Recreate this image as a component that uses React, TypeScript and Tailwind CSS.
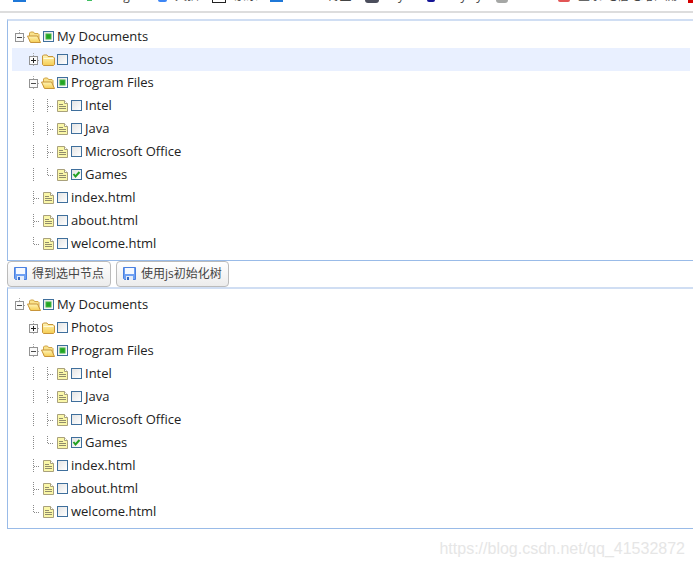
import React, { useState } from 'react';

type NodeState = 'off' | 'on' | 'partial';

interface TreeNode {
  text: string;
  state: NodeState;
  open?: boolean;
  children?: TreeNode[];
}

const documents: TreeNode[] = [
  {
    text: 'My Documents',
    state: 'partial',
    open: true,
    children: [
      { text: 'Photos', state: 'off', open: false, children: [] },
      {
        text: 'Program Files',
        state: 'partial',
        open: true,
        children: [
          { text: 'Intel', state: 'off' },
          { text: 'Java', state: 'off' },
          { text: 'Microsoft Office', state: 'off' },
          { text: 'Games', state: 'on' },
        ],
      },
      { text: 'index.html', state: 'off' },
      { text: 'about.html', state: 'off' },
      { text: 'welcome.html', state: 'off' },
    ],
  },
];

const bookmarks = [
  { icon: 'h-[2px] w-[13px] bg-[#1f78d8]', label: '', width: 'w-[74px]' },
  { icon: 'h-px w-[5px] bg-[#3fbf62]', label: 'Google', width: 'w-[71px]' },
  { icon: 'h-[2px] w-[9px] rounded-b-full bg-[#3d86f5]', label: '天猫', width: 'w-[54px]' },
  { icon: 'h-[3px] w-[14px] border border-t-0 border-[#222222]', label: '京东', width: 'w-[58px]' },
  { icon: 'h-[2px] w-[13px] bg-[#1f78d8]', label: 'Bilibili 博主', width: 'w-[95px]' },
  { icon: 'h-[3px] w-[14px] rounded-b-sm bg-[#4b4e5c]', label: 'my', width: 'w-[62px]' },
  { icon: 'h-[2px] w-2 rounded-b-full bg-[#151596]', label: 'Maya y', width: 'w-[69px]' },
  { icon: 'h-[3px] w-3 rounded-b-sm bg-[#a5a7a5]', label: '', width: 'w-[62px]' },
  { icon: 'h-[2px] w-3 rounded-b-full bg-[#e25555]', label: '登录 电信电路检测', width: 'w-[130px]' },
  { icon: 'h-[3px] w-3 bg-[#d40000]', label: '', width: 'w-3' },
];

const Branch: React.FC<{ last: boolean }> = ({ last }) => (
  <svg width="14" height="14" className="shrink-0" stroke="#8a8a8a" strokeDasharray="1 1">
    <path d={last ? 'M7.5 0V8' : 'M7.5 0V14'} />
    <path d="M8 7.5H14" />
  </svg>
);

const Line = () => (
  <svg width="14" height="14" className="shrink-0" stroke="#8a8a8a" strokeDasharray="1 1">
    <path d="M7.5 0V14" />
  </svg>
);

const Expander: React.FC<{ open: boolean; root: boolean; onClick: () => void }> = ({ open, root, onClick }) => (
  <button type="button" aria-label={open ? 'Collapse' : 'Expand'} onClick={onClick} className="h-[14px] w-[14px] shrink-0">
    <svg width="14" height="14" fill="none">
      <path d={root ? 'M7.5 0V3M12 7.5H14' : 'M7.5 0V3M7.5 12V14M12 7.5H14'} stroke="#aaaaaa" strokeDasharray="1 1" />
      <rect x="3.5" y="3.5" width="8" height="8" fill="#fafafa" stroke="#939393" />
      <path d="M5 7.5H10" stroke={open ? '#4a4a4a' : '#222222'} />
      {!open && <path d="M7.5 5V10" stroke="#222222" />}
    </svg>
  </button>
);

const FolderIcon: React.FC<{ open: boolean }> = ({ open }) => (
  <svg width="14" height="14" className="shrink-0" strokeLinejoin="round">
    <defs>
      <linearGradient id="folder" x1="0" y1="0" x2="0" y2="1">
        <stop offset="0" stopColor="#fff6b8" />
        <stop offset="1" stopColor="#f5cc52" />
      </linearGradient>
    </defs>
    {open ? (
      <>
        <path d="M2.5 11V3L3.5 2H6.5L7.5 3.5H11L12 4.5V11Z" fill="#f9e28c" stroke="#d1a548" />
        <path d="M.5 6H10.5L13.5 12.5H3.5Z" fill="url(#folder)" stroke="#c8953a" />
      </>
    ) : (
      <>
        <path d="M1.5 11.5V3L2.5 2H6L7 3.5H12L13.5 5V11.5L12.5 12.5H2.5Z" fill="url(#folder)" stroke="#c8953a" />
        <path d="M2.5 5.5H12.5" stroke="#fffbe0" />
      </>
    )}
  </svg>
);

const FileIcon = () => (
  <svg width="14" height="14" className="shrink-0">
    <path d="M2.5 1.5H9.5L12.5 4.5V12.5H2.5Z" fill="#faf7a8" stroke="#a9a17c" />
    <path d="M9.5 1.5V4.5H12.5" fill="#ffffff" stroke="#a9a17c" />
    <path d="M4 5.5H8M4 7.5H11M4 9.5H11" stroke="#918c6c" />
  </svg>
);

const Tick: React.FC<{ state: NodeState; label: string; id: string; onChange: () => void }> = ({ state, label, id, onChange }) => (
  <span className="grid h-[14px] w-[14px] shrink-0 place-items-center">
    <input
      id={id}
      type="checkbox"
      aria-label={label}
      checked={state === 'on'}
      ref={(el) => {
        if (el) el.indeterminate = state === 'partial';
      }}
      onChange={onChange}
      className="col-start-1 row-start-1 h-[11px] w-[11px] appearance-none border border-[#3f6f9c] bg-linear-to-br from-[#e4e4e4] to-white"
    />
    {state !== 'off' && (
      <svg width="11" height="11" className="pointer-events-none col-start-1 row-start-1">
        {state === 'partial' ? (
          <rect x="3" y="3" width="5" height="5" fill="#22a522" stroke="#45b445" />
        ) : (
          <path d="M2.5 5L4.5 7.5L8.5 3" fill="none" stroke="#22a122" strokeWidth="2" />
        )}
      </svg>
    )}
  </span>
);

interface RowsProps {
  nodes: TreeNode[];
  level: number;
  prefix: string;
  highlight?: string;
}

const Rows: React.FC<RowsProps> = ({ nodes, level, prefix, highlight }) => (
  <ul>
    {nodes.map((node, idx) => (
      <Row key={node.text} node={node} level={level} last={idx === nodes.length - 1} prefix={prefix} highlight={highlight} />
    ))}
  </ul>
);

const Row: React.FC<{ node: TreeNode; level: number; last: boolean; prefix: string; highlight?: string }> = ({
  node,
  level,
  last,
  prefix,
  highlight,
}) => {
  const [open, setOpen] = useState(!!node.open);
  const [state, setState] = useState(node.state);
  const id = prefix + '-' + node.text.toLowerCase().replace(/\W/g, '-');

  return (
    <li>
      <div className={`flex h-[23px] items-center hover:bg-[#e9f0ff] ${highlight === node.text ? 'bg-[#e9f0ff]' : ''}`}>
        {level > 0 && <span className="w-[14px] shrink-0" />}
        {level === 2 && <Line />}
        {node.children ? (
          <Expander open={open} root={level === 0} onClick={() => setOpen(!open)} />
        ) : (
          <Branch last={last} />
        )}
        <span className="ml-px flex">{node.children ? <FolderIcon open={open} /> : <FileIcon />}</span>
        <Tick id={id} state={state} label={node.text} onChange={() => setState(state === 'on' ? 'off' : 'on')} />
        <label htmlFor={id} className="ml-[2px] whitespace-nowrap">
          {node.text}
        </label>
      </div>
      {node.children && open && <Rows nodes={node.children} level={level + 1} prefix={prefix} highlight={highlight} />}
    </li>
  );
};

const TreePanel: React.FC<{ prefix: string; highlight?: string }> = ({ prefix, highlight }) => (
  <section className="border-t-2 border-b border-l border-t-[#d0def3] border-b-[#99bbe8] border-l-[#99bbe8] pt-1 pr-[3px] pb-[5px] pl-1 text-[13px] text-[#222222]">
    <Rows nodes={documents} level={0} prefix={prefix} highlight={highlight} />
  </section>
);

const SaveIcon = () => (
  <svg width="14" height="14" className="shrink-0">
    <path d="M.5 .5H12.5V12.5H1.5L.5 11.5Z" fill="#6fa0f2" stroke="#4a80e0" />
    <rect x="2" y="1" width="9" height="6" fill="#f6f9ff" />
    <rect x="3" y="9" width="7" height="4" fill="#e4ecf9" />
    <rect x="4" y="10" width="2" height="3" fill="#3469c4" />
  </svg>
);

const ToolButton: React.FC<{ children: React.ReactNode }> = ({ children }) => (
  <button
    type="button"
    className="flex h-[26px] items-center gap-1 rounded border border-[#bbbbbb] bg-linear-to-b from-white to-[#ececec] px-[6px] text-xs whitespace-nowrap text-[#444444]"
  >
    <SaveIcon />
    {children}
  </button>
);

export default function App() {
  return (
    <div className="bg-white font-['Open_Sans','Noto_Sans_CJK_SC',sans-serif]">
      <nav className="flex h-[13px] overflow-hidden border-b-2 border-[#dddddd] pl-[13px] text-xs text-[#444444]">
        {bookmarks.map((mark, idx) => (
          <a key={idx} href="#" className={`flex shrink-0 gap-2 ${mark.width}`}>
            <span className={`shrink-0 ${mark.icon}`} />
            <span className="-mt-[10px] h-4 leading-3 whitespace-nowrap">{mark.label}</span>
          </a>
        ))}
      </nav>

      <main className="pt-[6px] pl-[7px]">
        <TreePanel prefix="first" highlight="Photos" />
        <div className="flex gap-[5px]">
          <ToolButton>得到选中节点</ToolButton>
          <ToolButton>使用js初始化树</ToolButton>
        </div>
        <TreePanel prefix="second" />
      </main>

      <footer className="pt-2 pr-2 text-right font-['Liberation_Sans',sans-serif] text-base text-[#e6e6e6]">
        https://blog.csdn.net/qq_41532872
      </footer>
    </div>
  );
}
